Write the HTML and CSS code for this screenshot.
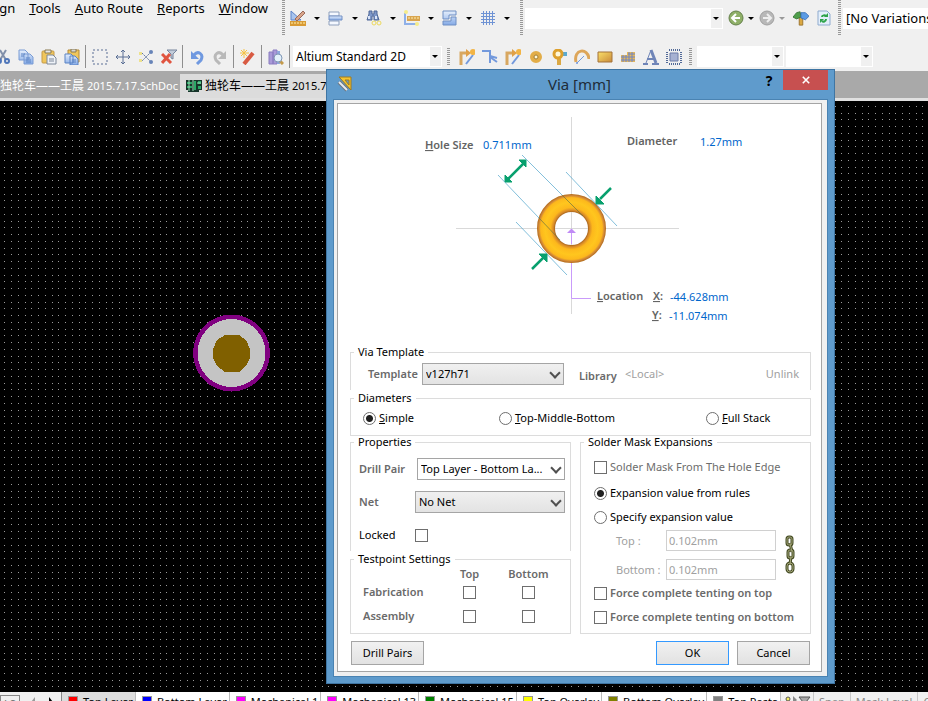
FILE: index.html
```html
<!DOCTYPE html>
<html lang="en">
<head>
<meta charset="utf-8">
<title>Via [mm]</title>
<link rel="stylesheet" href="styles.css">
</head>
<body>
<svg class="defs" aria-hidden="true">
  <defs>
    <linearGradient id="blue" x1="0" y1="0" x2="0" y2="1"><stop offset="0" stop-color="#e6effc"/><stop offset="1" stop-color="#84aae6"/></linearGradient>
    <linearGradient id="gold" x1="0" y1="0" x2="1" y2="1"><stop offset="0" stop-color="#fbe06a"/><stop offset="1" stop-color="#c98a3a"/></linearGradient>
    <symbol id="copy" viewBox="0 0 16 16"><path d="M1 1h6l3 3v7H1zM6 5h6l3 3v7H6z" fill="url(#blue)" stroke="#7a9cd4"/><path d="M3 5h4M3 7h3M8 9h4M8 11h5M8 13h5" stroke="#5b83c4"/></symbol>
    <symbol id="paste" viewBox="0 0 16 16"><rect x="1" y="2" width="12" height="12" rx="1" fill="#f0c65c" stroke="#c49a48"/><path d="M4 1h6v3H4z" fill="#e8e8e8" stroke="#8a7a50"/><path d="M6 6h6l3 3v6H6z" fill="#eef2f8" stroke="#7d8899"/><path d="M8 10h5M8 12h5" stroke="#7d8899"/></symbol>
    <symbol id="track" viewBox="0 0 16 16"><path d="M2 16V4h6" fill="none" stroke="#d8a760" stroke-width="3"/><path d="M7 0l5 4-5 4z" fill="#e0a048"/><path d="M7 15l7-9" stroke="#7399dc" stroke-width="2"/><circle cx="14" cy="3" r="3" fill="#f2b445"/></symbol>
  </defs>
</svg>
<div class="app">
  <header class="bars">
    <div class="bar">
      <nav class="menu">
        <a href="#">Desi<u>g</u>n</a><a href="#"><u>T</u>ools</a><a href="#"><u>A</u>uto Route</a><a href="#"><u>R</u>eports</a><a href="#"><u>W</u>indow</a>
      </nav>
      <span class="grip"></span>
      <div class="tools drop-tools">
        <button class="tool drop" aria-label="Utilities"><svg viewBox="0 0 16 16"><path d="M1 1v9h10z" fill="#a8c4ee" stroke="#5d83c8"/><path d="M5 9l8-8 2 2-8 8z" fill="#d9a58a" stroke="#9a6a5a"/><path d="M0 11h16v5H0z" fill="#d99b34"/><path d="M2 12v2M5 12v2M8 12v2M11 12v2M14 12v2" stroke="#fff0b0"/></svg></button>
        <button class="tool drop" aria-label="Align"><svg viewBox="0 0 16 16"><path d="M1 2h10v4H1zM1 11h10v4H1z" fill="#f4f8ff" stroke="#8fa0bc"/><path d="M1 6h13v4H1z" fill="url(#blue)" stroke="#7290c4"/></svg></button>
        <button class="tool drop" aria-label="Find"><svg viewBox="0 0 16 16"><path d="M3 1h3v3h2V1h3v3l2 6H8V6H6v4H1l2-6z" fill="#7d97c8" stroke="#4e6797"/><path d="M3 6v3M10 6v3" stroke="#dbe6fa" stroke-width="2"/><circle cx="8" cy="13" r="2" fill="none" stroke="#ecd95c"/><circle cx="13" cy="13" r="2" fill="none" stroke="#ecd95c"/></svg></button>
        <button class="tool drop" aria-label="Dimension"><svg viewBox="0 0 16 16"><path d="M1 3v11h12" fill="none" stroke="#8fb0e8" stroke-width="2"/><path d="M3 6h13v5H3z" fill="#d9a550"/><path d="M5 7v2M8 7v2M11 7v2M14 7v2" stroke="#fff0b0"/><circle cx="2" cy="2" r="2" fill="#f5ec8a"/><circle cx="13" cy="14" r="2" fill="#f5ec8a"/></svg></button>
        <button class="tool drop" aria-label="Room"><svg viewBox="0 0 16 16"><path d="M1 1h13v4H7v4H1zM9 7h5v8H1v-4h8z" fill="url(#blue)" stroke="#6f8fc4"/></svg></button>
        <button class="tool drop" aria-label="Grid"><svg viewBox="0 0 16 16"><path d="M3.500 1v14M6.500 1v14M9.500 1v14M12.500 1v14M1 3.500h14M1 6.500h14M1 9.500h14M1 12.500h14" stroke="#6f93d4"/></svg></button>
      </div>
      <span class="grip"></span>
      <button class="combo address" aria-label="Address"></button>
      <div class="tools nav-tools">
        <button class="tool drop tight" aria-label="Back"><svg viewBox="0 0 16 16"><circle cx="8" cy="8" r="7" fill="#8fb068" stroke="#64804a"/><path d="M12 8H5M8 4L4 8l4 4" fill="none" stroke="#fff" stroke-width="2"/></svg></button>
        <button class="tool drop tight off" aria-label="Forward"><svg viewBox="0 0 16 16"><circle cx="8" cy="8" r="7" fill="#b8b8b8" stroke="#a0a0a0"/><path d="M4 8h7M8 4l4 4-4 4" fill="none" stroke="#eee" stroke-width="2"/></svg></button>
        <button class="tool" aria-label="Home"><svg viewBox="0 0 18 16"><path d="M7 3h4v13H7z" fill="#dba843" stroke="#96702a"/><path d="M8 1l-4 1-4 5 4 2 5-2z" fill="#4e9e4a" stroke="#387538"/><path d="M9 2h5l4 4-4 4-5-2z" fill="#5b9be4" stroke="#3e72b8"/></svg></button>
        <button class="tool" aria-label="Refresh"><svg viewBox="0 0 16 16"><path d="M2 1h9l3 3v11H2z" fill="#e4effb" stroke="#8fabcf"/><path d="M6 7c0-2 3-2 4-1M10 9c0 3-3 3-4 2" fill="none" stroke="#2fa44b" stroke-width="2"/><path d="M12 3v4H8zM4 13V9h4z" fill="#2fa44b"/></svg></button>
      </div>
      <span class="grip"></span>
      <div class="variations">[No Variations]</div>
    </div>
    <div class="bar">
      <div class="tools edit-tools">
        <button class="tool" aria-label="Cut"><svg viewBox="0 0 16 16"><path d="M5 1l6 10M11 1L5 11" stroke="#8290aa" stroke-width="2"/><circle cx="4" cy="12" r="2" fill="none" stroke="#4f76ba" stroke-width="2"/><circle cx="12" cy="12" r="2" fill="none" stroke="#4f76ba" stroke-width="2"/></svg></button>
        <button class="tool" aria-label="Copy"><svg><use href="#copy"/></svg></button>
        <button class="tool" aria-label="Paste"><svg><use href="#paste"/></svg></button>
        <button class="tool" aria-label="Rubber stamp"><svg viewBox="0 0 16 16"><path d="M4 1h11v12H4z" fill="#f0c65c" stroke="#b48a38"/><path d="M7 0h5v3H7z" fill="#d5d5d5" stroke="#8a7a50"/><path d="M1 5h6l2 2v7H1zM6 7h5l3 3v6H6z" fill="url(#blue)" stroke="#5b83c4"/><path d="M8 11h4M8 13h4" stroke="#5b83c4"/></svg></button>
        <span class="sep"></span>
        <button class="tool" aria-label="Select"><svg viewBox="0 0 16 16"><rect x="1" y="1" width="14" height="14" fill="none" stroke="#5a6f95" stroke-dasharray="2 2"/></svg></button>
        <button class="tool" aria-label="Move"><svg viewBox="0 0 16 16"><path d="M8 2v12M2 8h12M6 3l2-2 2 2M6 13l2 2 2-2M3 6L1 8l2 2M13 6l2 2-2 2" fill="none" stroke="#5a6f95"/></svg></button>
        <button class="tool" aria-label="Deselect"><svg viewBox="0 0 16 16"><path d="M4 4l4 4-4 4M13 3L8 8l5 5" fill="none" stroke="#60779e" stroke-dasharray="2 1"/><circle cx="13" cy="3" r="2" fill="#6784b8"/><circle cx="13" cy="13" r="2" fill="#6784b8"/><path d="M1 3h3v3H1zM1 10h3v3H1z" fill="#eee28c"/></svg></button>
        <button class="tool" aria-label="Clear filter"><svg viewBox="0 0 16 16"><path d="M6 1h10l-4 4v5l-2-1V5z" fill="#c2ccda" stroke="#76849c"/><path d="M1 5l9 9M9 5l-8 9" stroke="#e0543f" stroke-width="3"/></svg></button>
        <span class="sep"></span>
        <button class="tool" aria-label="Undo"><svg viewBox="0 0 16 16"><path d="M5 6c4-5 10-1 7 5l-4 4" fill="none" stroke="#7099e0" stroke-width="3"/><path d="M2 2v8h8z" fill="#7099e0"/></svg></button>
        <button class="tool" aria-label="Redo"><svg viewBox="0 0 16 16"><path d="M11 6C7 1 1 5 4 11l4 4" fill="none" stroke="#b9b9b9" stroke-width="3"/><path d="M14 2v8H6z" fill="#b9b9b9"/></svg></button>
        <span class="sep"></span>
        <button class="tool" aria-label="Wizard"><svg viewBox="0 0 16 16"><path d="M4 15L13 4" stroke="#d85a42" stroke-width="4"/><path d="M4 0v9M0 4h9M1 1l6 6M7 1L1 7" stroke="#f5c244"/></svg></button>
        <span class="sep"></span>
        <button class="tool" aria-label="Browse"><svg viewBox="0 0 16 16"><path d="M1 3h4v12H1zM5 1h4v14H5z" fill="#a99ad8" stroke="#8a7cc0"/><path d="M9 2h3v13H9z" fill="#8fa8dc"/><path d="M12 12l3 3" stroke="#c49a4c" stroke-width="3"/><circle cx="10" cy="9" r="4" fill="#e3f1fb" stroke="#8096b4"/></svg></button>
        <span class="sep"></span>
      </div>
      <button class="combo view">Altium Standard 2D</button>
      <span class="grip"></span>
      <div class="tools place-tools">
        <button class="tool" aria-label="Route"><svg><use href="#track"/></svg></button>
        <button class="tool" aria-label="Differential"><svg viewBox="0 0 16 16"><path d="M0 2h8v12M8 3v4l7 2M8 8l7 5" fill="none" stroke="#7399dc" stroke-width="2"/></svg></button>
        <button class="tool" aria-label="Multi route"><svg><use href="#track"/></svg></button>
        <button class="tool" aria-label="Pad"><svg viewBox="0 0 16 16"><circle cx="8" cy="8" r="4" fill="#fff8d8" stroke="#e2ad48" stroke-width="4"/><circle cx="8" cy="8" r="2" fill="#fff8d8" stroke="#a07a30"/></svg></button>
        <button class="tool" aria-label="Via"><svg viewBox="0 0 16 16"><path d="M8 10v6" stroke="#dba843" stroke-width="4"/><path d="M10 5h6" stroke="#5baad0" stroke-width="4"/><circle cx="7" cy="5" r="4" fill="#fff8d8" stroke="#dda02d" stroke-width="3"/></svg></button>
        <button class="tool" aria-label="Arc"><svg viewBox="0 0 16 16"><path d="M2 13C-1 0 14-2 15 10" fill="none" stroke="#dda65a" stroke-width="3"/><path d="M3 14l7-7" stroke="#7399dc"/><circle cx="3" cy="14" r="1" fill="#7399dc"/></svg></button>
        <button class="tool" aria-label="Fill"><svg viewBox="0 0 16 16"><path d="M1 3h14v10H1z" fill="url(#gold)" stroke="#a3733a"/></svg></button>
        <button class="tool" aria-label="Polygon"><svg viewBox="0 0 16 16"><path d="M1 6h6V3h8v10H1z" fill="#eab955"/><path d="M1 8h14M1 11h14M8 5h7M3 6v7M6 6v7M9 3v10M12 3v10" stroke="#6f86c8"/></svg></button>
        <button class="tool" aria-label="String"><svg viewBox="0 0 16 16"><path d="M3 14L8 1" stroke="#6f85b8"/><path d="M8 1l5 13" stroke="#6f85b8" stroke-width="3"/><path d="M4 10h7M0 15h5M9 15h7" stroke="#6f85b8" stroke-width="2"/></svg></button>
        <button class="tool" aria-label="Component"><svg viewBox="0 0 16 16"><path d="M3 1h11M3 15h11" stroke="#526a98" stroke-width="2" stroke-dasharray="1 1"/><path d="M1 3v11M15 3v11" stroke="#526a98" stroke-width="2" stroke-dasharray="1 1"/><path d="M4 4h8v8H4z" fill="#a6b1d2" stroke="#6d7ca8"/></svg></button>
      </div>
      <span class="grip"></span>
      <button class="combo small" aria-label="Filter"></button>
      <button class="combo small" aria-label="Mask"></button>
    </div>
  </header>
  <nav class="docs">
    <a class="doc" href="#">独轮车——王晨 <small>2015.7.17.SchDoc</small></a>
    <a class="doc active" href="#"><svg viewBox="0 0 16 12"><path d="M0 0h16v10h-3v2H2v-2H0z" fill="#16342a"/><path d="M1 2h5v2H1zM1 6h5v2H1zM8 1h2v9H8zM12 1h3v3h-3zM12 6h3v3h-3z" fill="#29a866"/><path d="M3 0v11M7 0v11M11 3h4" stroke="#9fe0b8"/></svg>独轮车——王晨 <small>2015.7.17.PcbDoc</small></a>
  </nav>
  <main class="board">
    <svg class="board-art" aria-label="Board">
      <defs><pattern id="dots" x="11" y="5" width="27" height="27" patternUnits="userSpaceOnUse"><g stroke="#9a9a9a" shape-rendering="crispEdges" stroke-dasharray="1 6 1 6 1 5 1 6"><path d="M0 .5h27M0 7.500h27M0 13.500h27M0 20.500h27"/></g></pattern></defs>
      <rect width="100%" height="100%" fill="url(#dots)"/>
      <g shape-rendering="crispEdges"><circle cx="231.500" cy="252" r="38.500" fill="#800080"/><circle cx="231.500" cy="252" r="34" fill="#c4c4c4"/><path d="M225 234h14l7 5 4 9v9l-4 8-7 6h-14l-8-6-4-8v-9l4-9z" fill="#806000"/></g>
    </svg>
  </main>
  <footer class="layers">
    <div class="layer-nav"><button class="ls">LS</button><svg viewBox="0 0 26 12"><path d="M5 0v10L1 5z" fill="#9a9a9a"/><path d="M19 0v10l4-5z" fill="#000"/></svg></div>
    <a href="#" class="layer on"><i class="red"></i>Top Layer</a>
    <a href="#" class="layer"><i class="navy"></i>Bottom Layer</a>
    <a href="#" class="layer"><i class="pink"></i>Mechanical 1</a>
    <a href="#" class="layer"><i class="pink"></i>Mechanical 13</a>
    <a href="#" class="layer"><i class="green"></i>Mechanical 15</a>
    <a href="#" class="layer"><i class="yellow"></i>Top Overlay</a>
    <a href="#" class="layer"><i class="olive"></i>Bottom Overlay</a>
    <a href="#" class="layer"><i class="gray"></i>Top Paste</a>
    <svg class="layer-tools" viewBox="0 0 32 12"><circle cx="7" cy="4" r="2" fill="#f5ec60" stroke="#555"/><path d="M12 1l4 4-4 4z" fill="#888"/><path d="M18 2h11l-4 5v5l-3-2V7z" fill="#aaa" stroke="#555"/></svg>
    <button class="mask">Snap</button><button class="mask">Mask Level</button><button class="mask">Clear</button>
  </footer>
</div>

<section class="dialog" role="dialog" aria-labelledby="dialog-title">
  <div class="titlebar">
    <svg class="title-icon" viewBox="0 0 16 16"><path d="M2 1h12v13z" fill="#f4c430" stroke="#a07a20"/><path d="M8 4h4v5z" fill="#5f9bcc" stroke="#a07a20"/><path d="M2 6l8 8" stroke="#6d7780" stroke-width="4"/><path d="M2 6l8 8" stroke="#e8eaee" stroke-width="2"/></svg>
    <h1 id="dialog-title">Via [mm]</h1>
    <button class="help" aria-label="Help">?</button>
    <button class="close" aria-label="Close"><svg viewBox="0 0 10 10"><path d="M1 1l8 8M9 1L1 9" stroke="#fff" stroke-width="2"/></svg></button>
  </div>
  <div class="frame">
    <form class="panel">
      <svg class="preview" viewBox="350 104 461 240">
        <defs>
          <radialGradient id="ring" gradientUnits="userSpaceOnUse" cx="571.500" cy="228.500" r="35">
            <stop offset=".46" stop-color="#9a5c1c"/><stop offset=".52" stop-color="#d98a28"/><stop offset=".6" stop-color="#fdb81c"/><stop offset=".75" stop-color="#ffc61e"/><stop offset=".88" stop-color="#fdb81c"/><stop offset=".94" stop-color="#cf8438"/><stop offset="1" stop-color="#a8640f"/>
          </radialGradient>
        </defs>
        <path d="M571.500 117v197M456 228.500h223" stroke="#d9d9d9"/>
        <circle cx="571.500" cy="228.500" r="25.500" fill="none" stroke="url(#ring)" stroke-width="18"/>
        <g stroke="#4ea3cc" stroke-width=".7"><path d="M522 155l40 40M498 175l41 43M566 172l51 54M516 222l51 53"/></g>
        <path d="M562 195l21 21M539 218l21 22" stroke="#6b7440" stroke-width=".7"/>
        <path d="M571.500 263v35.500H591M571.500 232v12" fill="none" stroke="#c99bfa"/>
        <path d="M567 233l4.500-4.500 4.500 4.500z" fill="#c08af5"/>
        <g fill="#08a06e" stroke="#08a06e"><path d="M508 179l15-15M611 188l-11 11M532 269l11-11" stroke-width="2.500"/><path d="M526 160v7l-7-7zM505 182v-7l7 7zM596 204v-8l8 8zM547 254v8l-8-8z"/></g>
        <g class="cap"><text x="425" y="149"><tspan class="u">H</tspan>ole Size</text><text x="627" y="145">Diameter</text><text x="597" y="300"><tspan class="u">L</tspan>ocation</text><text x="653" y="300"><tspan class="u">X</tspan>:</text><text x="652" y="319"><tspan class="u">Y</tspan>:</text></g>
        <g class="val"><text x="483" y="149">0.711mm</text><text x="700" y="146">1.27mm</text><text x="670" y="301">-44.628mm</text><text x="669" y="320">-11.074mm</text></g>
      </svg>

      <fieldset class="open">
        <legend>Via Template</legend>
        <div class="template">
          <label for="template" class="strong">Template</label>
          <span class="select"><select id="template"><option>v127h71</option></select></span>
          <span class="strong lib">Library</span><span class="faint local">&lt;Local&gt;</span><span class="faint unlink">Unlink</span>
        </div>
      </fieldset>

      <fieldset>
        <legend>Diameters</legend>
        <div class="diameters">
          <label><input type="radio" name="dia" checked><span><u>S</u>imple</span></label>
          <label><input type="radio" name="dia"><span><u>T</u>op-Middle-Bottom</span></label>
          <label><input type="radio" name="dia"><span><u>F</u>ull Stack</span></label>
        </div>
      </fieldset>

      <div class="columns">
        <div>
          <fieldset class="open">
            <legend>Properties</legend>
            <div class="props">
              <div class="prop"><label for="pair" class="strong">Drill Pair</label><span class="select white"><select id="pair"><option>Top Layer - Bottom La...</option></select></span></div>
              <div class="prop"><label for="net" class="strong">Net</label><span class="select wide"><select id="net"><option>No Net</option></select></span></div>
              <div class="prop"><label for="locked">Locked</label><input type="checkbox" id="locked"></div>
            </div>
          </fieldset>
          <fieldset class="testpoint">
            <legend>Testpoint Settings</legend>
            <table>
              <thead><tr><td></td><th scope="col">Top</th><th scope="col">Bottom</th><td class="rest"></td></tr></thead>
              <tbody>
                <tr><th scope="row">Fabrication</th><td><input type="checkbox" aria-label="Fabrication top"></td><td><input type="checkbox" aria-label="Fabrication bottom"></td><td></td></tr>
                <tr><th scope="row">Assembly</th><td><input type="checkbox" aria-label="Assembly top"></td><td><input type="checkbox" aria-label="Assembly bottom"></td><td></td></tr>
              </tbody>
            </table>
          </fieldset>
        </div>
        <fieldset>
          <legend>Solder Mask Expansions</legend>
          <div class="solder">
            <label class="dim"><input type="checkbox"><span>Solder Mask From The Hole Edge</span></label>
            <label class="spaced"><input type="radio" name="exp" checked><span>Expansion value from rules</span></label>
            <label><input type="radio" name="exp"><span>Specify expansion value</span></label>
            <div class="expansion">
              <label for="exp-top" class="faint">Top :</label><input type="text" id="exp-top" value="0.102mm" disabled>
              <label for="exp-bottom" class="faint">Bottom :</label><input type="text" id="exp-bottom" value="0.102mm" disabled>
              <svg class="chain" viewBox="0 0 12 40"><g fill="none" stroke="#434a22" stroke-width="3"><rect x="3" y="2" width="5" height="8" rx="2"/><rect x="4" y="15" width="5" height="8" rx="2"/><rect x="3" y="28" width="6" height="9" rx="3"/><path d="M6 8l2 9M7 21l-1 9"/></g><g fill="none" stroke="#a3a578"><rect x="3" y="2" width="5" height="8" rx="2"/><rect x="4" y="15" width="5" height="8" rx="2"/><rect x="3" y="28" width="6" height="9" rx="3"/><path d="M6 8l2 9M7 21l-1 9"/></g></svg>
            </div>
            <label class="strong"><input type="checkbox"><span>Force complete tenting on top</span></label>
            <label class="strong"><input type="checkbox"><span>Force complete tenting on bottom</span></label>
          </div>
        </fieldset>
      </div>
      <div class="actions"><button type="button" class="push">Drill Pairs</button><button type="button" class="push ok">OK</button><button type="button" class="push">Cancel</button></div>
    </form>
  </div>
</section>
</body>
</html>
```
FILE: styles.css
```css
* { box-sizing: border-box; }
body { margin: 0; height: 100vh; overflow: hidden; font: 11px/16px "Noto Sans", "Noto Sans CJK SC", sans-serif; color: #000; background: #000; }
button, input, select { font: inherit; color: inherit; margin: 0; padding: 0; border: 0; background: none; border-radius: 0; }
a { color: inherit; text-decoration: none; }
.defs { position: absolute; width: 0; height: 0; }

.app { display: flex; flex-direction: column; height: 100vh; }
.bars { background: #f0f0f0; height: 71px; flex: none; overflow: hidden; }
.bar { display: flex; align-items: center; height: 36px; font-size: 13px; }
.bar + .bar { height: 41px; }
.menu { display: flex; justify-content: flex-end; gap: 14px; width: 280px; padding-right: 12px; height: 36px; flex: none; overflow: hidden; white-space: nowrap; }
.grip { width: 3px; height: 36px; flex: none; margin: 0 2px; background: repeating-linear-gradient(#999 0 1px, #f0f0f0 1px 2px); }
.bar + .bar .grip { height: 18px; margin: 0 5px; }
.tools { display: flex; align-items: center; flex: none; }
.tool { display: flex; align-items: center; justify-content: center; width: 23px; height: 24px; flex: none; }
.tool svg { width: 16px; height: 16px; flex: none; }
.drop-tools { padding: 0 1px 0 2px; }
.drop { width: 38px; justify-content: flex-start; gap: 8px; padding-left: 1px; }
.drop::after, .combo::after { content: ""; border: 3px solid transparent; border-top-color: #000; border-bottom: 0; }
.drop.tight { width: 31px; gap: 4px; }
.off::after { border-top-color: #999; }
.combo { display: flex; align-items: center; justify-content: space-between; height: 21px; flex: none; padding: 0 3px; font-size: 12px; white-space: nowrap; border: 1px solid #fff; border-left: 0; background: linear-gradient(to left, #f0f0f0 11px, #fff 11px); }
.combo::after { margin-left: auto; }
.combo.address { width: 198px; }
.combo.view { width: 149px; margin-left: 1px; }
.combo.small { width: 87px; margin-right: 2px; }
.nav-tools { padding-left: 4px; width: 113px; }
.variations { flex: 1; min-width: 0; background: #fff; height: 21px; line-height: 20px; padding-left: 3px; overflow: hidden; white-space: nowrap; }
.edit-tools { margin-left: -9px; }
.place-tools { width: 229px; }
.sep { width: 1px; height: 23px; margin: 0 2px; background: #8e8e8e; }

.docs { display: flex; align-items: flex-end; height: 30px; flex: none; background: #a9a9a9; border-bottom: 3px solid #e0e0e0; white-space: nowrap; overflow: hidden; }
.doc { height: 24px; line-height: 24px; color: #fff; font-size: 12px; width: 180px; flex: none; display: flex; gap: 3px; align-items: center; }
.doc small { font-size: 11px; }
.doc.active { width: 240px; background: #dcdcdc; color: #000; padding-left: 6px; }
.doc.active svg { width: 16px; height: 12px; }

.board { flex: 1; min-height: 0; background: #000; }
.board-art { display: block; width: 100%; height: 100%; }

.layers { display: flex; align-items: flex-start; height: 9px; flex: none; background: #f0f0f0; overflow: hidden; white-space: nowrap; }
.layer-nav { width: 62px; flex: none; display: flex; gap: 10px; padding-top: 3px; border-right: 1px solid #888; }
.ls { width: 20px; height: 16px; border: 1px solid #888; line-height: 16px; color: #777; }
.layer-nav svg { width: 26px; height: 12px; margin-top: 2px; }
.layer { display: flex; gap: 5px; flex: none; padding: 2px 2px 0 6px; background: #fff; border-right: 1px solid #bbb; }
.layer.on { background: #dcdcdc; }
.layer i { width: 10px; height: 10px; margin-top: 2px; border: 1px solid #999; }
.red { background: #f00; } .navy { background: #00f; } .pink { background: #f0f; } .green { background: #008000; }
.yellow { background: #ff0; } .olive { background: #808000; } .gray { background: #808080; }
.layer-tools { width: 32px; height: 12px; margin-top: 3px; flex: none; }
.mask { color: #888; padding: 2px 5px 0; border-left: 1px solid #c8c8c8; flex: none; }

.dialog { position: absolute; left: 326px; top: 69px; width: 509px; padding: 0 6px 6px; background: #5f9bcc; border: 1px solid #3f75a3; }
.titlebar { display: flex; align-items: flex-start; height: 29px; }
.title-icon { width: 16px; height: 16px; margin: 6px 0 0 4px; }
.titlebar h1 { flex: 1; margin: 0 0 0 51px; font-size: 15px; line-height: 29px; font-weight: 400; text-align: center; color: #202c38; }
.help { width: 28px; line-height: 22px; font-size: 14px; font-weight: 700; }
.close { width: 45px; height: 20px; background: #c75050; display: flex; align-items: center; justify-content: center; }
.close svg { width: 8px; height: 8px; }
.frame { padding: 3px 5px 4px 3px; background: #f0f0f0; border: 1px solid #4a83b2; }
.panel { background: #fff; border: 1px solid #a5a5a5; padding: 0 10px 6px 12px; }
.preview { display: block; width: 100%; height: 240px; }
.preview text { font-size: 11px; }
.cap { fill: #646464; font-weight: 600; }
.val { fill: #0066cc; }
.u { text-decoration: underline; }

fieldset { margin: 0; padding: 0; min-width: 0; border: 1px solid #dcdcdc; }
fieldset.open { border-bottom: 0; }
legend { margin-left: 3px; padding: 0 4px; height: 16px; }
label { white-space: nowrap; }
.strong, th { color: #6a6a6a; font-weight: 600; }
.faint { color: #a0a0a0; }
.dim { color: #6d6d6d; }
.select { position: relative; display: block; width: 142px; height: 22px; }
.select select { appearance: none; width: 100%; height: 100%; padding: 0 20px 0 3px; border: 1px solid #a5a5a5; background: linear-gradient(#f0f0f0, #e3e3e3); }
.select::after { content: ""; position: absolute; right: 5px; top: 6px; width: 6px; height: 6px; border: solid #505050; border-width: 0 2px 2px 0; transform: rotate(45deg); pointer-events: none; }
.select.white select { background: #fff; }
input[type="radio"], input[type="checkbox"] { appearance: none; flex: none; width: 13px; height: 13px; border: 1px solid #6e6e6e; background: #fff; }
input[type="radio"] { border-radius: 50%; }
input[type="radio"]:checked { background: radial-gradient(circle, #202020 3px, #fff 4px); }

.template { display: flex; align-items: center; padding: 3px 11px 5px 17px; }
.template .select { margin: 0 15px 0 6px; }
.template label { width: 48px; }
.lib { margin-top: 4px; width: 46px; }
.unlink { margin-left: auto; }
.diameters { display: grid; grid-template-columns: 136px 207px 1fr; padding: 4px 0 9px 12px; }
.diameters label, .solder > label { display: flex; align-items: center; gap: 3px; height: 16px; }
.columns { display: grid; grid-template-columns: 219fr 232fr; gap: 9px; margin-top: -2px; }
.props { display: grid; gap: 11px; padding: 8px 5px 5px 8px; }
.prop { display: flex; align-items: center; height: 22px; }
.prop label { width: 56px; }
.prop .select { width: 148px; margin-left: auto; }
.prop .select.wide { width: 150px; }
.testpoint table { width: 100%; border-collapse: collapse; table-layout: fixed; }
.testpoint td, .testpoint th { padding: 0; height: 24px; width: 59px; text-align: center; vertical-align: middle; }
.testpoint tr > :first-child { width: 89px; text-align: left; padding-left: 12px; }
.testpoint thead td, .testpoint thead th { height: 13px; line-height: 13px; }
.testpoint td.rest { width: auto; }
.testpoint input { display: block; margin: 0 auto; }
.testpoint { padding-bottom: 5px; }
.solder { padding: 9px 13px 7px; }
.solder > label + label { margin-top: 8px; }
.solder > label.spaced { margin-top: 10px; }
.expansion { display: grid; grid-template-columns: 50px 110px 12px; gap: 8px 0; margin: 5px 0 5px 22px; align-items: center; }
.expansion input { height: 21px; width: 110px; padding: 0 2px; border: 1px solid #d0d0d0; color: #a0a0a0; }
.chain { grid-column: 3; grid-row: 1 / 3; width: 12px; height: 40px; margin-left: 8px; }
.actions { display: flex; gap: 8px; margin-top: 7px; padding: 0 1px; }
.push { width: 73px; height: 24px; border: 1px solid #a5a5a5; background: linear-gradient(#f1f1f1, #e2e2e2); }
.actions .ok { margin-left: auto; border-color: #3399ff; }
```
